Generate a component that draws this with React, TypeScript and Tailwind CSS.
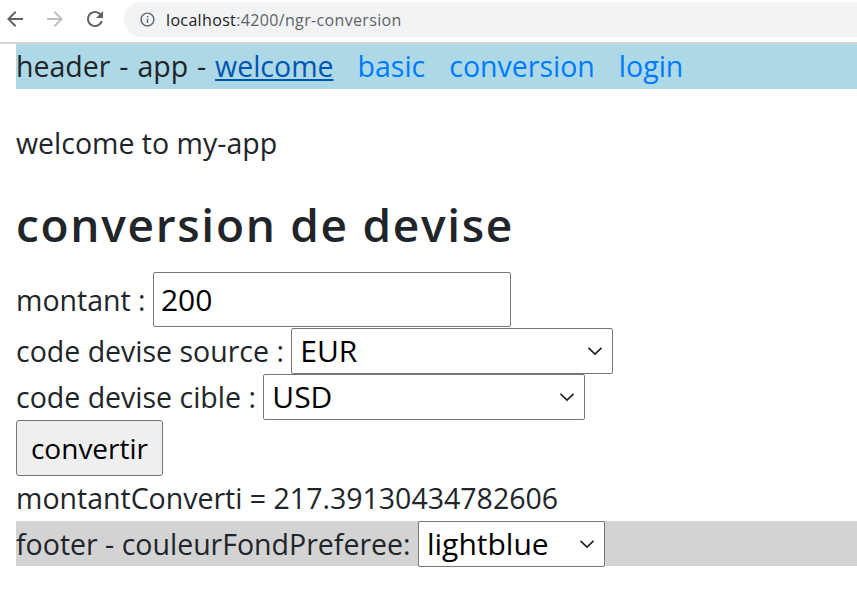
import React, { useState } from 'react';

const Chevron = () => (
  <svg className="w-[16px] h-[10px]" viewBox="0 0 16 10" fill="none" stroke="#222" strokeWidth={1.7}>
    <path d="M1.5 1.8l6.5 6.2 6.5-6.2" />
  </svg>
);

const Select = ({ value, options, width }: { value: string; options: string[]; width: string }) => (
  <span className={`relative inline-flex ${width}`}>
    <select
      defaultValue={value}
      className="appearance-none w-full h-[46px] bg-white border border-[#767676] rounded-[2px] pl-[8px] pr-8 text-[30px] leading-[44px] text-black outline-none"
    >
      {options.map(o => (
        <option key={o} value={o}>{o}</option>
      ))}
    </select>
    <span className="absolute right-[10px] top-[18px] flex pointer-events-none">
      <Chevron />
    </span>
  </span>
);

const BrowserBar: React.FC = () => (
  <div className="h-[42px] flex items-start">
    <div className="flex items-center h-[37px] w-[124px] pl-[3px]">
      <svg className="w-6 h-6" viewBox="0 0 24 24" fill="#5f6368">
        <path d="M20 11H7.83l5.59-5.59L12 4l-8 8 8 8 1.41-1.41L7.83 13H20v-2z" />
      </svg>
      <svg className="w-6 h-6 ml-[16px]" viewBox="0 0 24 24" fill="#bdc1c6">
        <path d="M12 4l-1.41 1.41L16.17 11H4v2h12.17l-5.58 5.59L12 20l8-8z" />
      </svg>
      <svg className="w-6 h-6 ml-[16px]" viewBox="0 0 24 24" fill="#5f6368">
        <path d="M17.65 6.35C16.2 4.9 14.21 4 12 4c-4.42 0-7.99 3.58-7.99 8s3.57 8 7.99 8c3.73 0 6.84-2.55 7.73-6h-2.08c-.82 2.33-3.04 4-5.65 4-3.31 0-6-2.69-6-6s2.69-6 6-6c1.66 0 3.140.69 4.22 1.78L13 11h7V4l-2.35 2.35z" />
      </svg>
    </div>
    <div className="mt-[2px] h-[35px] flex-1 bg-[#f1f3f4] rounded-l-full flex items-center pl-[15px]">
      <svg className="w-[17px] h-[17px]" viewBox="0 0 24 24" fill="#5f6368">
        <path d="M11 7h2v2h-2zm0 4h2v6h-2zm1-9C6.48 2 2 6.48 2 12s4.48 10 10 10 10-4.48 10-10S17.520 2 12 2zm0 18c-4.41 0-8-3.59-8-8s3.59-8 8-8 8 3.59 8 8-3.59 8-8 8z" />
      </svg>
      <span className="ml-[10px] text-[16px] tracking-[0.35px]">
        <span className="text-[#202124]">localhost</span>
        <span className="text-[#5f6368]">:4200/ngr-conversion</span>
      </span>
    </div>
  </div>
);

export default function App() {
  const [montant, setMontant] = useState('200');

  return (
    <div className="w-[857px] h-[597px] overflow-hidden bg-white text-[#212529]" style={{ fontFamily: '"Open Sans", "Noto Sans", sans-serif' }}>
      <BrowserBar />
      <div className="h-[2px] bg-[#d6d6d6]" />

      <div className="pl-4 text-[28.5px] leading-[45px]">
        <div className="h-[45px] bg-[#add8e6] whitespace-nowrap">
          <span className="[word-spacing:1.5px]">header - app - </span>
          <a href="#" className="text-[#0056b3] underline">welcome</a>
          <a href="#" className="ml-[24px] text-[#007bff]">basic</a>
          <a href="#" className="ml-[24px] text-[#007bff]">conversion</a>
          <a href="#" className="ml-[24px] text-[#007bff]">login</a>
        </div>

        <p className="mt-[32px]">welcome to my-app</p>

        <h1 className="mt-[31px] text-[46px] leading-[55px] font-semibold tracking-[1.7px]">conversion de devise</h1>

        <div className="mt-[20px] flex items-baseline">
          <span className="whitespace-pre">montant : </span>
          <input
            value={montant}
            onChange={e => setMontant(e.target.value)}
            className="w-[358px] h-[55px] border border-[#767676] rounded-[2px] px-[7px] text-[30px] text-black outline-none"
          />
        </div>
        <div className="mt-px flex items-baseline">
          <span className="whitespace-pre">code devise source : </span>
          <Select value="EUR" options={['EUR', 'USD', 'GBP', 'JPY']} width="w-[322px]" />
        </div>
        <div className="flex items-baseline">
          <span className="whitespace-pre">code devise cible : </span>
          <Select value="USD" options={['USD', 'EUR', 'GBP', 'JPY']} width="w-[322px]" />
        </div>
        <div className="flex">
          <button className="w-[147px] h-[56px] bg-[#efefef] border border-[#767676] rounded-[3px] text-[28px] leading-[44px] text-black">
            convertir
          </button>
        </div>
        <p>montantConverti = 217.39130434782606</p>

        <div className="h-[45px] bg-[#d3d3d3] flex items-baseline whitespace-nowrap">
          <span className="whitespace-pre">footer - couleurFondPreferee: </span>
          <Select value="lightblue" options={['lightblue', 'lightgreen', 'white', 'yellow']} width="w-[187px]" />
        </div>
      </div>
    </div>
  );
}
